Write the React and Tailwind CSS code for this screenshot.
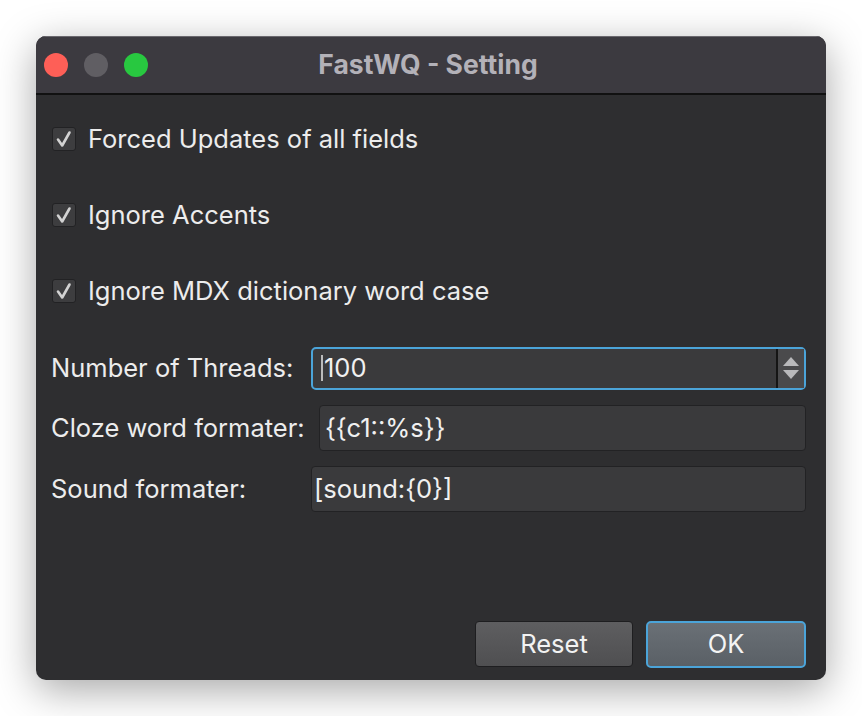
import { useState } from "react";

// ---------- small pieces ----------
function Check({ label }) {
  return (
    <label className="flex items-center gap-[12px] h-[26px]">
      <span className="flex h-[24px] w-[24px] items-center justify-center rounded-[3px] border border-[#222224] bg-[#3d3d3f]">
        <svg width="18" height="18" viewBox="0 0 18 18">
          <path d="M3 9.5 L7.2 15.5 L14.5 2.5" fill="none" stroke="#d2d2d2" strokeWidth="2.6" strokeLinecap="round" strokeLinejoin="round" />
        </svg>
      </span>
      <span className="text-[25.5px] text-[#ececec]">{label}</span>
    </label>
  );
}

function Field({ label, value, className = "" }) {
  return (
    <div className="flex items-center h-[46px]">
      <span className="w-[260px] text-[25.5px] text-[#ececec]">{label}</span>
      <div className={"flex-1 h-[46px] flex items-center rounded-[4px] border border-[#222224] bg-[#3a3a3c] text-[25.5px] text-[#f0f0f0] " + className}>
        {value}
      </div>
    </div>
  );
}

export default function App() {
  const [threads] = useState("100");

  return (
    <div
      className="h-[716px] w-[862px] bg-white pl-[36px] pt-[36px]"
      style={{ fontFamily: "Inter, 'Open Sans', sans-serif" }}
    >
      <div className="flex h-[644px] w-[790px] flex-col overflow-hidden rounded-[10px] bg-[#2e2e30] shadow-[0_10px_40px_rgba(0,0,0,0.35)]">
        {/* title bar */}
        <div className="relative flex h-[59px] items-center border-b-2 border-[#111] border-t border-t-[#6a686e] bg-[#3c3a40] px-[8px]">
          <div className="flex gap-[16px]">
            <span className="h-[24px] w-[24px] rounded-full bg-[#fe5f57]" />
            <span className="h-[24px] w-[24px] rounded-full bg-[#605e63]" />
            <span className="h-[24px] w-[24px] rounded-full bg-[#28c840]" />
          </div>
          <div className="absolute inset-0 flex items-center justify-center pr-[6px] text-[26.5px] font-bold text-[#b3b1b8]">
            FastWQ - Setting
          </div>
        </div>

        {/* body */}
        <div className="flex flex-1 flex-col pl-[15px] pr-[20px] pt-[31px] pb-[12px]">
          <div className="flex flex-col gap-[50px] pl-[1px]">
            <Check label="Forced Updates of all fields" />
            <Check label="Ignore Accents" />
            <Check label="Ignore MDX dictionary word case" />
          </div>

          <div className="mt-[42px] flex flex-col gap-[15px]">
            <div className="flex items-center h-[44px]">
              <span className="w-[260px] text-[25.5px] text-[#ececec]">Number of Threads:</span>
              <div className="flex-1 h-[43px] flex items-stretch rounded-[5px] border-2 border-[#4ba4d9] bg-[#3a3a3c]">
                <div className="flex flex-1 items-center pl-[8px] text-[25.5px] text-[#f0f0f0]">
                  <span className="mr-[1px] h-[26px] w-[2px] bg-[#bbb]" />
                  {threads}
                </div>
                <div className="flex w-[28px] flex-col items-center justify-center gap-[4px] border-l-2 border-[#151515] bg-[#4a4a4c]">
                  <svg width="16" height="9" viewBox="0 0 16 9"><path d="M8 0 L16 9 L0 9 Z" fill="#b9b9bb" /></svg>
                  <svg width="16" height="9" viewBox="0 0 16 9"><path d="M0 0 L16 0 L8 9 Z" fill="#b9b9bb" /></svg>
                </div>
              </div>
            </div>
            <Field label="Cloze word formater:" value="{{c1::%s}}" className="ml-[8px] px-[5px]" />
            <Field label="Sound formater:" value="[sound:{0}]" className="px-[2px]" />
          </div>

          <div className="mt-auto flex justify-end gap-[13px]">
            <button className="h-[46px] w-[158px] rounded-[4px] border border-[#1e1e20] bg-gradient-to-b from-[#5e5e60] to-[#4f4f51] text-[25.5px] text-[#f2f2f2]">
              Reset
            </button>
            <button className="h-[47px] w-[160px] rounded-[5px] border-2 border-[#4ba4d9] bg-gradient-to-b from-[#6a7076] to-[#5a6066] text-[25.5px] text-[#f4f4f4]">
              OK
            </button>
          </div>
        </div>
      </div>
    </div>
  );
}
